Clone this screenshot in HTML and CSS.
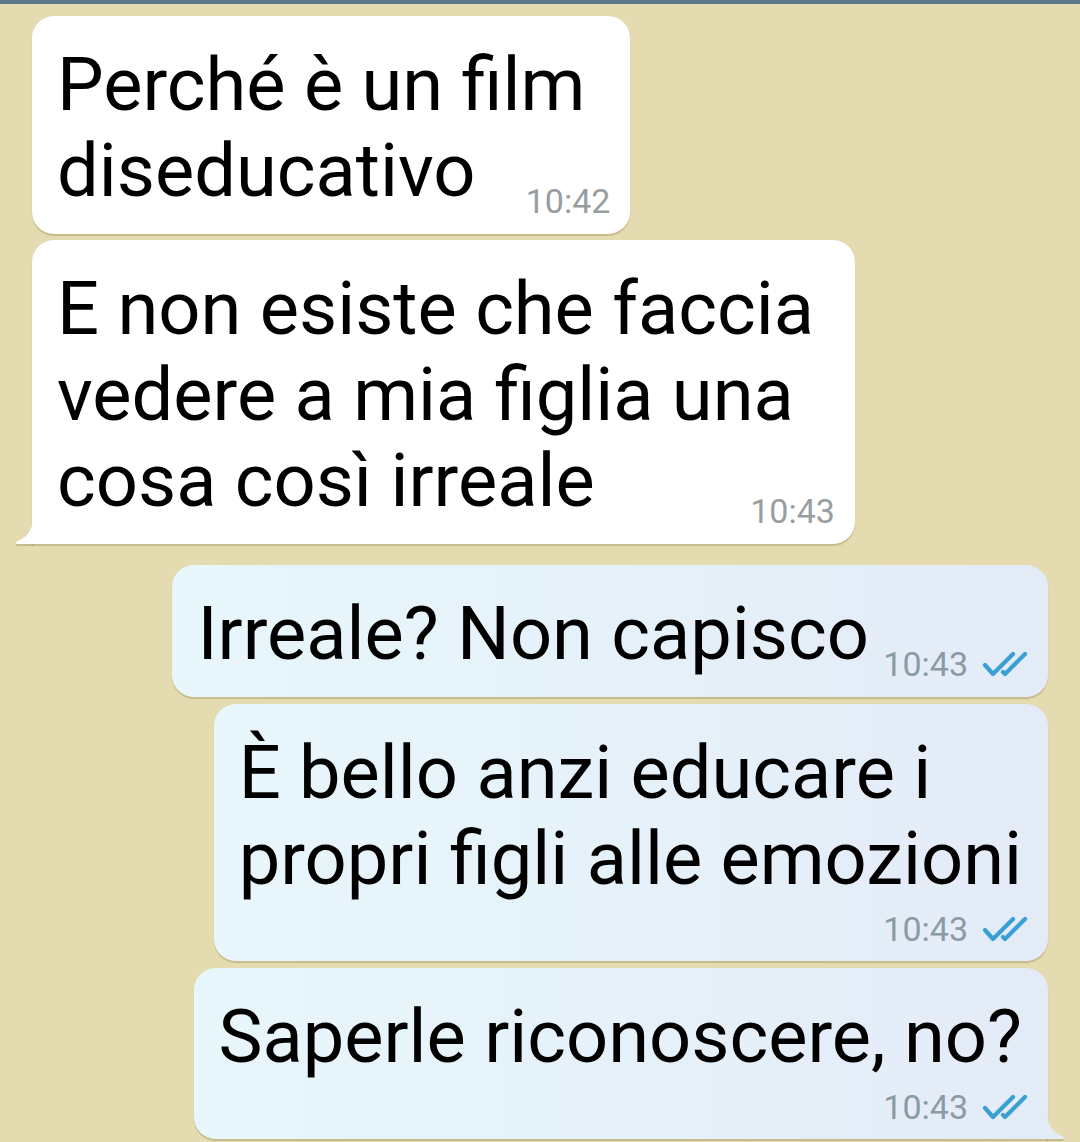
FILE: index.html
```html
<!DOCTYPE html>
<html lang="it">
<head>
<meta charset="utf-8">
<title>Chat</title>
<link rel="stylesheet" href="styles.css">
</head>
<body>
<div class="topbar"></div>
<main class="chat">
  <div class="bubble in">
    <p class="text">Perché è un film<br>diseducativo<span class="spacer"></span></p>
    <span class="meta">10:42</span>
  </div>
  <div class="bubble in tail">
    <p class="text">E non esiste che faccia<br>vedere a mia figlia una<br>cosa così irreale<span class="spacer"></span></p>
    <span class="meta">10:43</span>
    <svg class="tail-shape" viewBox="0 0 17 24" aria-hidden="true"><path d="M17 0 C16 11 10 18 1.5 21.2 C-0.5 22 -0.3 24 2 24 L17 24 Z"/></svg>
  </div>
  <div class="bubble out">
    <p class="text">Irreale? Non capisco<span class="spacer"></span></p>
    <span class="meta">10:43<svg class="ticks" viewBox="0 0 46 26" aria-hidden="true"><path d="M3 14 L11 23 L31 3 M21 21 L23 23 L43 3"/></svg></span>
  </div>
  <div class="bubble out stacked">
    <p class="text">È bello anzi educare i<br>propri figli alle emozioni</p>
    <span class="meta">10:43<svg class="ticks" viewBox="0 0 46 26" aria-hidden="true"><path d="M3 14 L11 23 L31 3 M21 21 L23 23 L43 3"/></svg></span>
  </div>
  <div class="bubble out stacked tail">
    <p class="text">Saperle riconoscere, no?</p>
    <span class="meta">10:43<svg class="ticks" viewBox="0 0 46 26" aria-hidden="true"><path d="M3 14 L11 23 L31 3 M21 21 L23 23 L43 3"/></svg></span>
    <svg class="tail-shape" viewBox="0 0 17 24" aria-hidden="true"><path d="M17 0 C16 11 10 18 1.5 21.2 C-0.5 22 -0.3 24 2 24 L17 24 Z"/></svg>
  </div>
</main>
</body>
</html>
```
FILE: styles.css
```css
* { box-sizing: border-box; }

html, body {
  margin: 0;
  padding: 0;
}

body {
  width: 1080px;
  height: 1142px;
  overflow: hidden;
  background: #e4dbb0;
  font-family: Roboto, "Noto Sans", "Liberation Sans", sans-serif;
  color: #000;
}

.topbar {
  height: 4px;
  background: #5a7a8b;
}

.chat {
  display: flex;
  flex-direction: column;
  padding: 12px 32px 0;
}

.bubble {
  position: relative;
  display: grid;
  padding: 26px 20px 20px 25px;
  border-radius: 22px;
  background: #fff;
  box-shadow: 0 2px 1px rgba(120, 105, 50, 0.28);
}

.bubble + .bubble { margin-top: 6px; }
.bubble.in + .bubble.out { margin-top: 21px; }
.bubble.out + .bubble.out { margin-top: 7px; }

.bubble.in { align-self: flex-start; }

.bubble.out {
  align-self: flex-end;
  background: linear-gradient(to right, #e8f7fb, #e3ebf7);
}

.text {
  grid-area: 1 / 1;
  margin: 0;
  padding-right: 21px;
  font-size: 74px;
  line-height: 86px;
  white-space: nowrap;
}

.spacer {
  display: inline-block;
  width: 114px;
  height: 1px;
}

.out .spacer { width: 138px; }

.meta {
  grid-area: 1 / 1;
  justify-self: end;
  align-self: end;
  display: flex;
  align-items: flex-end;
  gap: 14px;
  margin-bottom: -4px;
  font-size: 34px;
  line-height: 34px;
  color: #979ea2;
}

.out .meta { color: #8b9ba4; }

.stacked .text { padding-right: 6px; }

.stacked .meta {
  grid-area: 2 / 1;
  margin-top: 10px;
  margin-bottom: -5px;
}

.ticks {
  width: 46px;
  height: 26px;
  margin-bottom: 4px;
  fill: none;
  stroke: #3a9fd2;
  stroke-width: 4.2;
  stroke-linecap: round;
  stroke-linejoin: round;
}

.tail-shape {
  position: absolute;
  bottom: 0;
  width: 17px;
  height: 24px;
  fill: #fff;
  filter: drop-shadow(0 2px 0.5px rgba(120, 105, 50, 0.28));
}

.in.tail { border-bottom-left-radius: 0; }
.in .tail-shape { left: -16px; }

.out.tail { border-bottom-right-radius: 0; }
.out .tail-shape {
  right: -16px;
  transform: scaleX(-1);
  fill: #e3ebf7;
}
```
